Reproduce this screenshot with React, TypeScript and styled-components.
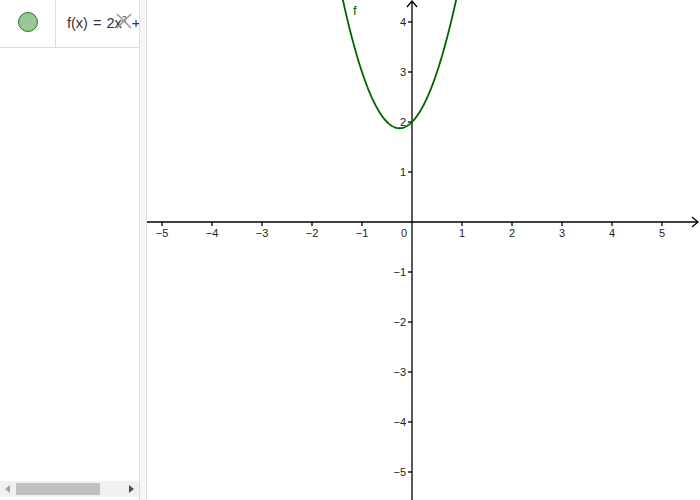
import styled, { createGlobalStyle } from "styled-components";

const GlobalStyle = createGlobalStyle`
  html, body {
    margin: 0;
    padding: 0;
    background: #ffffff;
    font-family: "Liberation Sans", Arial, sans-serif;
    overflow: hidden;
  }
`;

const UNIT = 50;
const OX = 265;
const OY = 222;
const W = 553;
const H = 500;

const f = (x: number) => 2 * x * x + x + 2;

function curvePath() {
  const pts: string[] = [];
  for (let px = 180; px <= 320; px += 0.5) {
    const x = (px - OX) / UNIT;
    const py = OY - f(x) * UNIT;
    if (py < -20) continue;
    pts.push(`${pts.length === 0 ? "M" : "L"}${px.toFixed(2)},${py.toFixed(2)}`);
  }
  return pts.join(" ");
}

export default function App() {
  return (
    <>
      <GlobalStyle />
      <Page>
        <AlgebraPanel>
          <Row>
            <Marker>
              <Dot />
            </Marker>
            <Formula>
              f(x) = 2x<sup>2</sup> + x + 2
              <CloseIcon viewBox="0 0 20 20">
                <path d="M3 3 L17 17 M17 3 L3 17" />
              </CloseIcon>
            </Formula>
          </Row>
          <Spacer />
          <HScroll>
            <Arrow $dir="left" />
            <Thumb />
            <Arrow $dir="right" />
          </HScroll>
        </AlgebraPanel>
        <Divider />
        <Graphics>
          <Graph />
        </Graphics>
      </Page>
    </>
  );
}

const Graph = () => {
  const xs = [-5, -4, -3, -2, -1, 1, 2, 3, 4, 5];
  const ys = [-5, -4, -3, -2, -1, 1, 2, 3, 4];
  return (
    <svg width={W} height={H} viewBox={`0 0 ${W} ${H}`}>
      <g stroke="#000" strokeWidth={1.3} fill="none">
        <line x1={0} y1={OY} x2={W - 2} y2={OY} />
        <line x1={OX} y1={H} x2={OX} y2={1} />
        <path d={`M${W - 8},${OY - 5} L${W - 2},${OY} L${W - 8},${OY + 5}`} />
        <path d={`M${OX - 5},${7} L${OX},${1} L${OX + 5},${7}`} />
        {xs.map((v) => (
          <line key={"xt" + v} x1={OX + v * UNIT} y1={OY} x2={OX + v * UNIT} y2={OY + 4} />
        ))}
        {ys.map((v) => (
          <line key={"yt" + v} x1={OX - 4} y1={OY - v * UNIT} x2={OX} y2={OY - v * UNIT} />
        ))}
      </g>
      <g fill="#222" fontFamily="Liberation Sans, Arial, sans-serif" fontSize={11}>
        {xs.map((v) => (
          <text key={"xl" + v} x={OX + v * UNIT} y={OY + 15} textAnchor="middle">
            {v < 0 ? "\u2212" + Math.abs(v) : v}
          </text>
        ))}
        {ys.map((v) => (
          <text key={"yl" + v} x={OX - 6} y={OY - v * UNIT + 4} textAnchor="end">
            {v < 0 ? "\u2212" + Math.abs(v) : v}
          </text>
        ))}
        <text x={OX - 5} y={OY + 15} textAnchor="end">0</text>
      </g>
      <path d={curvePath()} stroke="#006400" strokeWidth={1.8} fill="none" />
      <text x={206} y={15} fill="#006400" fontFamily="Liberation Sans, Arial, sans-serif" fontSize={13}>
        f
      </text>
    </svg>
  );
};

const Page = styled.div`
  display: flex;
  width: 700px;
  height: 500px;
  overflow: hidden;
`;

const AlgebraPanel = styled.div`
  width: 139px;
  display: flex;
  flex-direction: column;
  border-right: 1px solid #dcdcdc;
  background: #fff;
`;

const Row = styled.div`
  display: flex;
  height: 47px;
  border-bottom: 1px solid #dcdcdc;
`;

const Marker = styled.div`
  width: 56px;
  border-right: 1px solid #dcdcdc;
  display: flex;
  align-items: center;
  justify-content: center;
  padding-bottom: 4px;
  box-sizing: border-box;
`;

const Dot = styled.div`
  width: 18px;
  height: 18px;
  border-radius: 50%;
  background: #99c799;
  border: 1px solid #1f7a1f;
`;

const Formula = styled.div`
  position: relative;
  flex: 1;
  overflow: hidden;
  white-space: nowrap;
  font-size: 14.5px;
  word-spacing: 1px;
  color: #333;
  padding: 14px 0 0 11px;
  sup {
    font-size: 9px;
  }
`;

const CloseIcon = styled.svg`
  position: absolute;
  left: 58px;
  top: 11px;
  width: 20px;
  height: 20px;
  stroke: #9a9a9a;
  stroke-width: 1.6;
  fill: none;
`;

const Spacer = styled.div`
  flex: 1;
`;

const HScroll = styled.div`
  height: 16px;
  margin-bottom: 3px;
  background: #f1f1f1;
  display: flex;
  align-items: center;
  padding: 0 5px;
  gap: 6px;
`;

const Thumb = styled.div`
  width: 84px;
  height: 12px;
  background: #c1c1c1;
  margin-right: auto;
`;

const Arrow = styled.div<{ $dir: "left" | "right" }>`
  width: 0;
  height: 0;
  border-top: 4px solid transparent;
  border-bottom: 4px solid transparent;
  ${(p) =>
    p.$dir === "left"
      ? "border-right: 5px solid #a3a3a3;"
      : "border-left: 5px solid #505050;"}
`;

const Divider = styled.div`
  width: 6px;
  background: #f6f6f6;
  border-right: 1px solid #dcdcdc;
`;

const Graphics = styled.div`
  flex: 1;
  background: #fff;
  svg {
    display: block;
  }
`;
